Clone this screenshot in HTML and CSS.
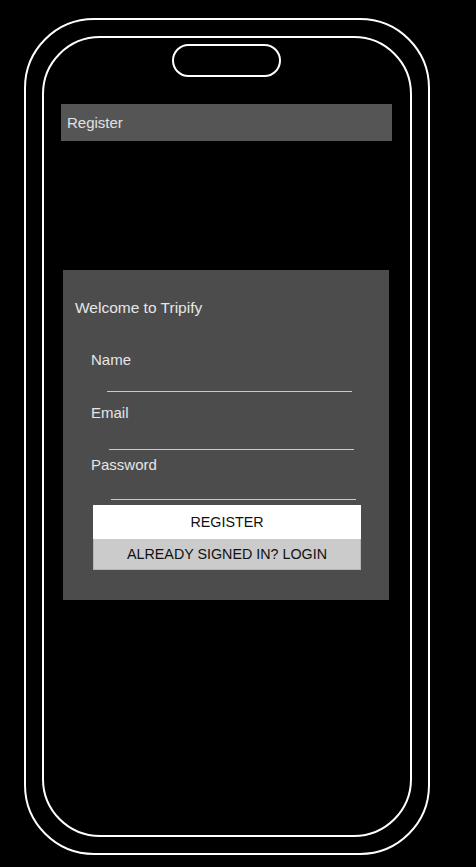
FILE: index.html
```html
<!DOCTYPE html>
<html lang="en">
<head>
<meta charset="utf-8">
<title>Register</title>
<link rel="stylesheet" href="styles.css">
</head>
<body>
<div class="phone">
  <div class="screen">
    <div class="notch"></div>
    <div class="appbar">Register</div>
    <form class="card">
      <div class="welcome">Welcome to Tripify</div>
      <div class="field field-name">
        <label class="label">Name</label>
        <div class="line"></div>
      </div>
      <div class="field field-email">
        <label class="label">Email</label>
        <div class="line"></div>
      </div>
      <div class="field field-password">
        <label class="label">Password</label>
        <div class="line"></div>
      </div>
      <div class="actions">
        <button type="button" class="btn btn-primary">REGISTER</button>
        <button type="button" class="btn btn-secondary">ALREADY SIGNED IN? LOGIN</button>
      </div>
    </form>
  </div>
</div>
</body>
</html>
```
FILE: styles.css
```css
* { box-sizing: border-box; }
html, body {
  margin: 0;
  padding: 0;
  background: #000;
  font-family: "Liberation Sans", Arial, sans-serif;
}
body {
  width: 476px;
  height: 867px;
  padding: 18px 0 0 24px;
}
.phone {
  width: 406px;
  height: 837px;
  border: 2px solid #fff;
  border-radius: 70px;
  padding: 16px;
}
.screen {
  width: 370px;
  height: 801px;
  border: 2px solid #fff;
  border-radius: 58px;
  display: flex;
  flex-direction: column;
  align-items: flex-start;
}
.notch {
  margin-top: 6px;
  margin-left: 128px;
  width: 109px;
  height: 33px;
  border: 2px solid #fff;
  border-radius: 17px;
  flex: none;
}
.appbar {
  margin-top: 27px;
  margin-left: 17px;
  width: 331px;
  height: 37px;
  background: #555;
  color: #e2e2e2;
  font-size: 15px;
  line-height: 37px;
  padding-left: 6px;
  flex: none;
}
.card {
  margin-top: 129px;
  margin-left: 19px;
  width: 326px;
  height: 330px;
  background: #4c4c4c;
  padding: 29px 0 0 0;
  display: flex;
  flex-direction: column;
  flex: none;
}
.welcome {
  color: #e6e6e6;
  font-size: 15.5px;
  line-height: 18px;
  padding-left: 12px;
}
.field {
  display: flex;
  flex-direction: column;
}
.label {
  color: #e6e6e6;
  font-size: 15px;
  line-height: 18px;
  padding-left: 28px;
}
.line {
  border-bottom: 1px solid #c9c9c9;
  width: 245px;
}
.field-name { margin-top: 34px; }
.field-name .line { height: 23px; margin-left: 44px; }
.field-email { margin-top: 12px; }
.field-email .line { height: 28px; margin-left: 46px; }
.field-password { margin-top: 6px; }
.field-password .line { height: 26px; margin-left: 48px; }
.actions {
  margin-top: 5px;
  margin-left: 30px;
  width: 268px;
  display: flex;
  flex-direction: column;
}
.btn {
  font-family: "Liberation Sans", Arial, sans-serif;
  font-size: 14.3px;
  color: #111;
  margin: 0;
  padding: 0;
  text-align: center;
  cursor: pointer;
}
.btn-primary {
  height: 34px;
  background: #fff;
  border: none;
}
.btn-secondary {
  height: 31px;
  background: #cbcbcb;
  border: 1px solid #b4b4b4;
  border-top: none;
}
```
